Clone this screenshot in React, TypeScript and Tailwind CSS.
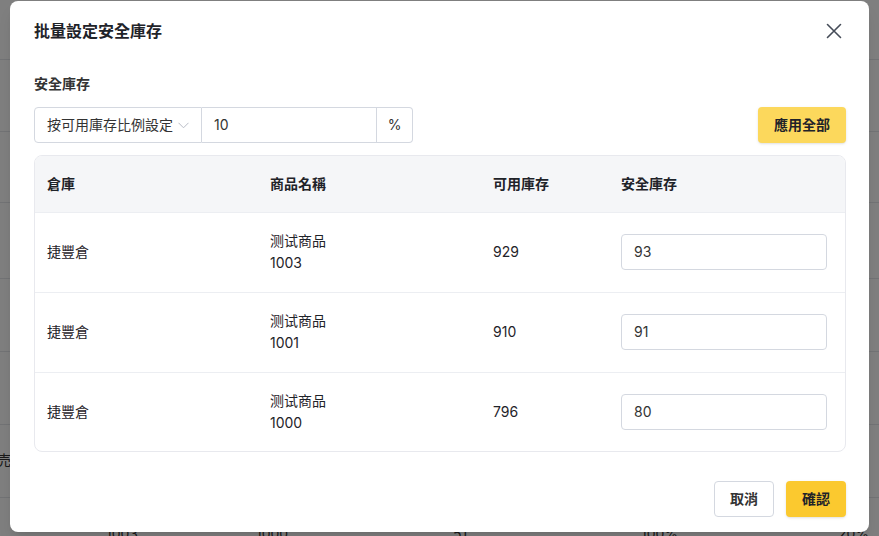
import React from 'react';

const rows = [
  { wh: '捷豐倉', name: '测试商品', sku: '1003', avail: '929', safe: '93' },
  { wh: '捷豐倉', name: '测试商品', sku: '1001', avail: '910', safe: '91' },
  { wh: '捷豐倉', name: '测试商品', sku: '1000', avail: '796', safe: '80' },
];

const cols = 'grid grid-cols-[222px_223px_128px_1fr]';

export default function App() {
  return (
    <div
      className="relative h-[536px] w-full overflow-hidden bg-white text-[#1f2329]"
      style={{ fontFamily: 'Inter, "Noto Sans CJK TC", sans-serif' }}
    >
      {/* page behind the dialog */}
      <div className="flex flex-col text-sm text-[#333]">
        <div className="h-[60px] border-b border-[#e5e7eb]" />
        <div className="h-[72px] border-b border-[#e5e7eb]" />
        <div className="h-[71px] border-b border-[#e5e7eb]" />
        <div className="h-[76px] border-b border-[#e5e7eb]" />
        <div className="h-[73px] border-b border-[#e5e7eb]" />
        <div className="h-[73px] border-b border-[#e5e7eb]" />
        <div className="flex h-[73px] items-center border-b border-[#e5e7eb] pl-0 pb-[2px]">
          <span className="-ml-[3px]">売</span>
        </div>
        <div className="flex h-[40px] items-start pt-[26px]">
          <span className="ml-[106px] w-[150px]">1003</span>
          <span className="w-[195px]">1000</span>
          <span className="w-[190px] pl-[2px]">51</span>
          <span className="w-[195px]">100%</span>
          <span className="pl-[2px]">20%</span>
        </div>
      </div>

      {/* overlay */}
      <div className="absolute inset-0 bg-black/50" />

      {/* dialog */}
      <div className="absolute left-[10px] top-[1px] flex h-[531px] w-[859px] flex-col rounded-lg bg-white shadow-lg">
        <div className="flex h-[60px] items-center justify-between px-6">
          <h2 className="text-base font-semibold text-[#1f2329]">批量設定安全庫存</h2>
          <button className="mr-[1px] flex h-5 w-5 items-center justify-center text-[#454c58]">
            <svg width="16" height="16" viewBox="0 0 16 16" fill="none" stroke="currentColor" strokeWidth="1.6" strokeLinecap="round">
              <path d="M1.5 1.5l13 13M14.5 1.5l-13 13" />
            </svg>
          </button>
        </div>

        <div className="flex flex-col pl-6 pr-[23px] pt-[13px]">
          <div className="h-5 text-sm leading-5 font-semibold text-[#333]">安全庫存</div>

          <div className="mt-[13px] flex h-9 items-stretch justify-between">
            <div className="flex">
              <div className="flex w-[168px] items-center justify-between rounded-l-[4px] border border-[#d4d8e0] pl-3 pr-[12px] text-sm text-[#333]">
                <span>按可用庫存比例設定</span>
                <svg width="11" height="7" viewBox="0 0 11 7" fill="none" stroke="#b8bcc6" strokeWidth="1">
                  <path d="M0.5 0.8l5 5 5-5" />
                </svg>
              </div>
              <div className="flex w-[175px] items-center border-y border-r border-[#d4d8e0] px-3 text-sm text-[#333]">10</div>
              <div className="flex w-9 items-center justify-center rounded-r-[4px] border-y border-r border-[#d4d8e0] text-sm text-[#333]">%</div>
            </div>
            <button className="w-[88px] rounded-[4px] bg-[#fcd85c] text-sm font-semibold text-[#1f2329] shadow-sm">應用全部</button>
          </div>

          <div className="mt-3 overflow-hidden rounded-lg border border-[#e8e9ee] text-sm">
            <div className={`${cols} h-[56px] items-center bg-[#f5f6f8] font-semibold`}>
              <div className="pl-[12px]">倉庫</div>
              <div className="pl-[13px]">商品名稱</div>
              <div className="pl-[13px]">可用庫存</div>
              <div className="pl-[13px]">安全庫存</div>
            </div>
            {rows.map((r, i) => (
              <div
                key={r.sku}
                className={`${cols} items-center border-t border-[#eceef2] pb-[1px] ${i === rows.length - 1 ? 'h-[79px]' : 'h-[80px]'}`}
              >
                <div className="pl-[12px]">{r.wh}</div>
                <div className="flex flex-col pl-[13px] leading-[22px]">
                  <span>{r.name}</span>
                  <span>{r.sku}</span>
                </div>
                <div className="pl-[13px]">{r.avail}</div>
                <div className="pl-[13px] pr-[18px]">
                  <div className="flex h-9 items-center rounded-[4px] border border-[#d4d8e0] px-3 text-[#333]">{r.safe}</div>
                </div>
              </div>
            ))}
          </div>
        </div>

        <div className="mt-[29px] flex justify-end gap-3 pl-6 pr-[23px]">
          <button className="h-9 w-[60px] rounded-[4px] border border-[#d4d8e0] bg-white text-sm font-semibold text-[#333]">取消</button>
          <button className="h-9 w-[60px] rounded-[4px] bg-[#fbc92f] text-sm font-semibold text-[#1f2329] shadow-sm">確認</button>
        </div>
      </div>
    </div>
  );
}
